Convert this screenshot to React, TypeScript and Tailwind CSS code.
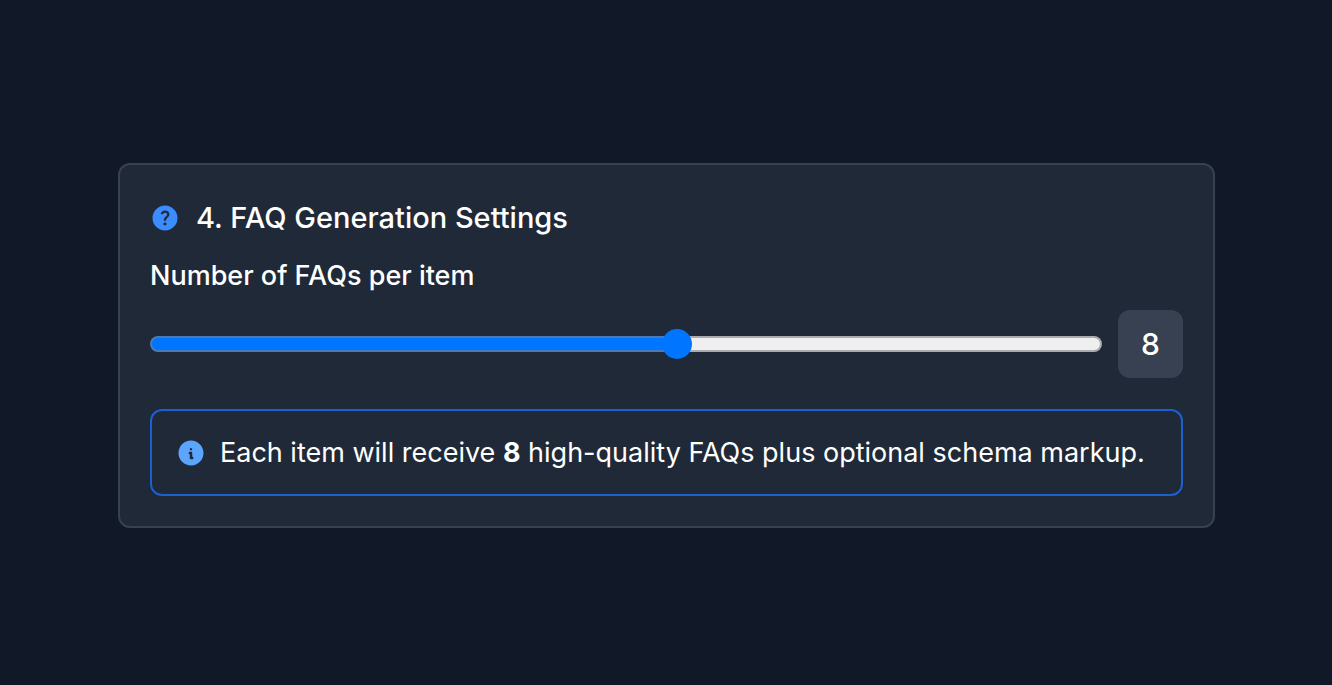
import { useState } from "react";
import { TbInfoCircleFilled } from "react-icons/tb";

const MIN = 3;
const MAX = 12;
const THUMB = 30;

function HelpIcon({ className }: { className?: string }) {
  return (
    <svg viewBox="0 -960 960 960" fill="currentColor" className={className} aria-hidden="true">
      <path d="M478-240q21 0 35.5-14.5T528-290q0-21-14.5-35.5T478-340q-21 0-35.5 14.5T428-290q0 21 14.5 35.5T478-240Zm-36-154h74q0-33 7.5-52t42.5-52q26-26 41-49.5t15-56.5q0-56-41-86t-97-30q-57 0-92.5 30T342-618l66 26q5-18 22.5-39t53.5-21q32 0 48 17.5t16 38.5q0 20-12 37.5T506-526q-44 39-54 59t-10 73Zm38 314q-83 0-156-31.5T197-197q-54-54-85.5-127T80-480q0-83 31.5-156T197-763q54-54 127-85.5T480-880q83 0 156 31.5T763-763q54 54 85.5 127T880-480q0 83-31.5 156T763-197q-54 54-127 85.5T480-80Z" />
    </svg>
  );
}

export default function App() {
  const [count, setCount] = useState(8);
  const ratio = (count - MIN) / (MAX - MIN);
  const stop = `calc(${THUMB / 2}px + (100% - ${THUMB}px) * ${ratio})`;

  return (
    <main className="min-h-screen bg-[#111827] pt-[163px] pr-[117px] pb-16 pl-[118px] font-['Inter',sans-serif] text-white">
      <section className="rounded-xl border-2 border-[#374151] bg-[#202937] p-[30px]">
        <h2 className="flex items-center gap-4 text-[29px] leading-[46px] font-medium">
          <HelpIcon className="size-[30px] shrink-0 text-[#3b8cff]" />
          4. FAQ Generation Settings
        </h2>

        <label htmlFor="faq-count" className="mt-[15px] block text-[27px] leading-[39px] font-medium">
          Number of FAQs per item
        </label>

        <div className="mt-[15px] flex items-center gap-4">
          <input
            id="faq-count"
            type="range"
            min={MIN}
            max={MAX}
            value={count}
            onChange={(e) => setCount(Number(e.target.value))}
            style={{
              backgroundImage: `linear-gradient(to right, #0075ff ${stop}, #efefef ${stop})`,
            }}
            className="h-4 min-w-0 flex-1 cursor-pointer appearance-none rounded-full border-2 border-[#7c7f86]/60 bg-origin-border [&::-webkit-slider-thumb]:size-[30px] [&::-webkit-slider-thumb]:appearance-none [&::-webkit-slider-thumb]:rounded-full [&::-webkit-slider-thumb]:bg-[#0075ff]"
          />
          <output
            htmlFor="faq-count"
            className="flex h-[68px] min-w-[65px] items-center justify-center rounded-xl bg-[#384152] text-[30px] font-medium"
          >
            {count}
          </output>
        </div>

        <div className="mt-[31px] flex items-center gap-[14px] rounded-xl border-2 border-[#1c5fd0] px-6 py-[22px]">
          <TbInfoCircleFilled className="size-[30px] shrink-0 text-[#5ba5ff]" aria-hidden="true" />
          <p className="text-[27px] leading-[39px]">
            Each item will receive <strong className="font-bold">{count}</strong> high-quality FAQs plus optional schema
            markup.
          </p>
        </div>
      </section>
    </main>
  );
}
